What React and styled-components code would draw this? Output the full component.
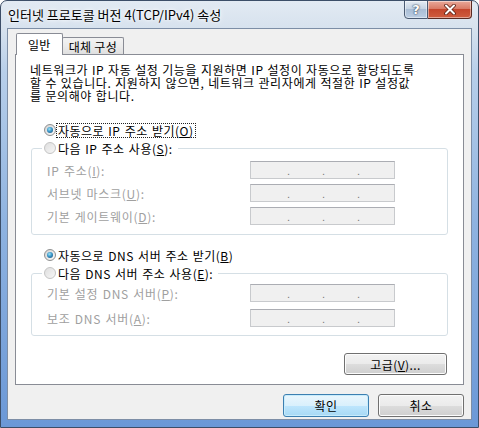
import styled, { createGlobalStyle } from "styled-components";

const GlobalStyle = createGlobalStyle`
  html, body {
    margin: 0;
    padding: 0;
    background: #fff;
  }
  body {
    font-family: "Noto Sans CJK KR", "Noto Sans", sans-serif;
    font-size: 12px;
    color: #000;
  }
`;

const Window = styled.div`
  box-sizing: border-box;
  width: 479px;
  height: 428px;
  display: flex;
  flex-direction: column;
  border: 1px solid #3c4e68;
  border-radius: 7px 7px 0 0;
  overflow: hidden;
  background: linear-gradient(
    to bottom,
    #e2eaf3 0px,
    #d7e2ee 27px,
    #b8cfea 70px,
    #8fb3e0 220px,
    #6b98d7 100%
  );
`;

const TitleBar = styled.div`
  height: 27px;
  display: flex;
  align-items: flex-start;
  padding-left: 7px;
`;

const Title = styled.div`
  line-height: 28px;
  font-size: 13px;
  text-shadow: 0 0 6px #fff, 0 0 3px #fff;
`;

const CaptionGroup = styled.div`
  margin-left: auto;
  margin-right: 6px;
  margin-top: -1px;
  display: flex;
`;

const CaptionBtn = styled.div`
  box-sizing: border-box;
  width: ${(p) => p.$w}px;
  height: 19px;
  display: flex;
  align-items: center;
  justify-content: center;
  border: 1px solid ${(p) => (p.$close ? "#5a2a22" : "#4a5a72")};
  border-left-width: ${(p) => (p.$close ? 0 : 1)}px;
  border-radius: ${(p) => (p.$close ? "0 0 4px 0" : "0 0 0 4px")};
  background: ${(p) =>
    p.$close
      ? "linear-gradient(to bottom, #e9a99a 0%, #d97b66 45%, #c4462c 50%, #cf5d3f 100%)"
      : "linear-gradient(to bottom, #e4ebf3 0%, #c5d3e3 45%, #a9bdd5 50%, #bccee3 100%)"};
  box-shadow: inset 0 0 0 1px rgba(255, 255, 255, 0.45);
  color: #fff;
  font-family: "DejaVu Sans", sans-serif;
  font-weight: bold;
  font-size: 13px;
  text-shadow: 0 0 2px #2c3a50, 0 0 1px #2c3a50;
`;

const Client = styled.div`
  flex: 1;
  display: flex;
  flex-direction: column;
  margin: 0 6px 7px 6px;
  padding: 4px 7px 0 7px;
  border: 1px solid #7d8ea6;
  background: #f0f0f0;
`;

const TabStrip = styled.div`
  display: flex;
  align-items: flex-end;
  height: 22px;
  padding-left: 1px;
`;

const Tab = styled.div`
  box-sizing: border-box;
  position: relative;
  z-index: ${(p) => (p.$active ? 2 : 0)};
  height: ${(p) => (p.$active ? 22 : 18)}px;
  padding: ${(p) => (p.$active ? "0 11px" : "1px 6px 0")};
  margin-left: ${(p) => (p.$active ? 0 : -1)}px;
  display: flex;
  align-items: center;
  border: 1px solid #898c95;
  border-bottom: none;
  border-radius: 2px 2px 0 0;
  background: ${(p) =>
    p.$active ? "#fff" : "linear-gradient(to bottom, #f3f3f3 0%, #ebebeb 50%, #dedede 100%)"};
  line-height: 14px;
  letter-spacing: 0.3px;
`;

const Panel = styled.div`
  box-sizing: border-box;
  position: relative;
  z-index: 1;
  height: 331px;
  margin-top: -1px;
  padding: 8px 15px 0 14px;
  border: 1px solid #898c95;
  background: #fff;
  display: flex;
  flex-direction: column;
`;

const Help = styled.p`
  margin: 0;
  line-height: 13px;
  letter-spacing: 0.6px;
  word-spacing: 0.5px;
  white-space: nowrap;
`;

const Choice = styled.div`
  display: flex;
  align-items: center;
  height: 16px;
  margin-top: ${(p) => p.$mt}px;
  padding-left: 14px;
`;

const Radio = styled.span`
  box-sizing: border-box;
  flex: none;
  width: 12px;
  height: 12px;
  border-radius: 50%;
  display: inline-flex;
  align-items: center;
  justify-content: center;
  border: 1px solid ${(p) => (p.$checked ? "#8e8f8f" : "#c4c4c4")};
  background: ${(p) =>
    p.$checked
      ? "linear-gradient(135deg, #d4d4d4, #fbfbfb)"
      : "linear-gradient(135deg, #dedede, #f7f7f7)"};

  &::after {
    content: "";
    display: ${(p) => (p.$checked ? "block" : "none")};
    width: 6px;
    height: 6px;
    border-radius: 50%;
    background: radial-gradient(circle at 40% 35%, #9fe4f7 0%, #3a96c8 45%, #17456f 100%);
  }
`;

const ChoiceText = styled.span`
  padding: 0 1px;
  border: 1px dotted ${(p) => (p.$focus ? "#222" : "transparent")};
  line-height: 13px;
  letter-spacing: 0.5px;
  word-spacing: 1px;
  white-space: nowrap;
`;

const Group = styled.fieldset`
  margin: ${(p) => p.$mt}px 0 0 1px;
  min-width: 0;
  padding: 0 15px ${(p) => p.$pb}px 15px;
  border: 1px solid #d5dfe5;
  border-radius: 3px;
`;

const Legend = styled.legend`
  margin-left: -5px;
  padding: 0 3px 0 2px;
  height: 16px;
`;

const LegendInner = styled.span`
  display: flex;
  align-items: center;
  height: 16px;
`;

const Fields = styled.div`
  display: grid;
  grid-template-columns: 203px 145px;
  grid-auto-rows: 18px;
  row-gap: ${(p) => p.$gap}px;
  margin-top: ${(p) => p.$mt}px;
  align-items: center;
`;

const FieldLabel = styled.span`
  color: #a0a0a0;
  line-height: 18px;
  padding-top: 1px;
  letter-spacing: 0.7px;
  word-spacing: 1px;
  white-space: nowrap;
`;

const IpBox = styled.div`
  box-sizing: border-box;
  height: 18px;
  display: flex;
  align-items: flex-end;
  padding: 0 0 1px 36px;
  border: 1px solid #c8cacd;
  border-top-color: #abadb3;
  background: #f0f0f0;
`;

const Dot = styled.span`
  width: 2px;
  margin-right: 33px;
  font-family: "Liberation Sans", sans-serif;
  font-size: 11px;
  line-height: 11px;
  color: #7a7a7a;
`;

const Button = styled.button`
  box-sizing: border-box;
  width: ${(p) => p.$w}px;
  height: ${(p) => p.$h}px;
  padding: 0;
  font-family: "Noto Sans CJK KR", sans-serif;
  font-size: 12px;
  letter-spacing: 0.4px;
  color: #000;
  border-radius: 3px;
  border: 1px solid ${(p) => (p.$default ? "#3c7fb1" : "#707070")};
  background: ${(p) =>
    p.$default
      ? "linear-gradient(to bottom, #eaf6fd 0%, #d9f0fc 50%, #bee6fd 50%, #a7d9f5 100%)"
      : "linear-gradient(to bottom, #f2f2f2 0%, #ebebeb 50%, #dddddd 50%, #cfcfcf 100%)"};
  box-shadow: inset 0 0 0 1px ${(p) => (p.$default ? "#c8ecfc" : "#fcfcfc")};
`;

const AdvancedRow = styled.div`
  display: flex;
  justify-content: flex-end;
  margin-top: 17px;
  padding-right: 1px;
`;

const Footer = styled.div`
  display: flex;
  justify-content: flex-end;
  gap: 9px;
  margin-top: 9px;
`;

const IpField = () => (
  <IpBox>
    <Dot>.</Dot>
    <Dot>.</Dot>
    <Dot>.</Dot>
  </IpBox>
);

const CloseIcon = () => (
  <svg width="14" height="11" viewBox="0 0 14 11">
    <path d="M3 1.5 L11 9.5 M11 1.5 L3 9.5" stroke="#5a1e12" strokeWidth="3.6" strokeLinecap="round" />
    <path d="M3 1.5 L11 9.5 M11 1.5 L3 9.5" stroke="#fff" strokeWidth="2" strokeLinecap="round" />
  </svg>
);

export default function App() {
  return (
    <>
      <GlobalStyle />
      <Window>
        <TitleBar>
          <Title>인터넷 프로토콜 버전 4(TCP/IPv4) 속성</Title>
          <CaptionGroup>
            <CaptionBtn $w={24}>?</CaptionBtn>
            <CaptionBtn $w={44} $close>
              <CloseIcon />
            </CaptionBtn>
          </CaptionGroup>
        </TitleBar>
        <Client>
          <TabStrip>
            <Tab $active>일반</Tab>
            <Tab>대체 구성</Tab>
          </TabStrip>
          <Panel>
            <Help>
              네트워크가 IP 자동 설정 기능을 지원하면 IP 설정이 자동으로 할당되도록
              <br />
              할 수 있습니다. 지원하지 않으면, 네트워크 관리자에게 적절한 IP 설정값
              <br />를 문의해야 합니다.
            </Help>

            <Choice $mt={20}>
              <Radio $checked />
              <ChoiceText $focus>
                자동으로 IP 주소 받기(<u>O</u>)
              </ChoiceText>
            </Choice>
            <Group $mt={2} $pb={9}>
              <Legend>
                <LegendInner>
                  <Radio />
                  <ChoiceText>
                    다음 IP 주소 사용(<u>S</u>):
                  </ChoiceText>
                </LegendInner>
              </Legend>
              <Fields $mt={5} $gap={5}>
                <FieldLabel>
                  IP 주소(<u>I</u>):
                </FieldLabel>
                <IpField />
                <FieldLabel>
                  서브넷 마스크(<u>U</u>):
                </FieldLabel>
                <IpField />
                <FieldLabel>
                  기본 게이트웨이(<u>D</u>):
                </FieldLabel>
                <IpField />
              </Fields>
            </Group>

            <Choice $mt={12}>
              <Radio $checked />
              <ChoiceText>
                자동으로 DNS 서버 주소 받기(<u>B</u>)
              </ChoiceText>
            </Choice>
            <Group $mt={2} $pb={8}>
              <Legend>
                <LegendInner>
                  <Radio />
                  <ChoiceText>
                    다음 DNS 서버 주소 사용(<u>E</u>):
                  </ChoiceText>
                </LegendInner>
              </Legend>
              <Fields $mt={3} $gap={7}>
                <FieldLabel>
                  기본 설정 DNS 서버(<u>P</u>):
                </FieldLabel>
                <IpField />
                <FieldLabel>
                  보조 DNS 서버(<u>A</u>):
                </FieldLabel>
                <IpField />
              </Fields>
            </Group>

            <AdvancedRow>
              <Button $w={103} $h={22}>
                고급(<u>V</u>)...
              </Button>
            </AdvancedRow>
          </Panel>
          <Footer>
            <Button $w={86} $h={23} $default>
              확인
            </Button>
            <Button $w={86} $h={23}>
              취소
            </Button>
          </Footer>
        </Client>
      </Window>
    </>
  );
}
